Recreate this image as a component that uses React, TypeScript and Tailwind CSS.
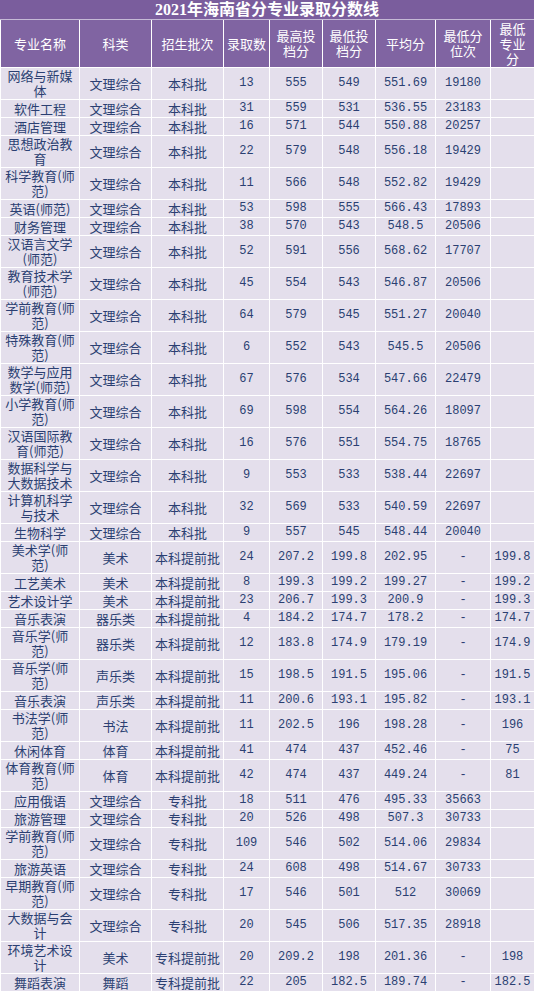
const rows: string[][] = [
  ["网络与新媒\n体", "文理综合", "本科批", "13", "555", "549", "551.69", "19180", ""],
  ["软件工程", "文理综合", "本科批", "31", "559", "531", "536.55", "23183", ""],
  ["酒店管理", "文理综合", "本科批", "16", "571", "544", "550.88", "20257", ""],
  ["思想政治教\n育", "文理综合", "本科批", "22", "579", "548", "556.18", "19429", ""],
  ["科学教育(师\n范)", "文理综合", "本科批", "11", "566", "548", "552.82", "19429", ""],
  ["英语(师范)", "文理综合", "本科批", "53", "598", "555", "566.43", "17893", ""],
  ["财务管理", "文理综合", "本科批", "38", "570", "543", "548.5", "20506", ""],
  ["汉语言文学\n(师范)", "文理综合", "本科批", "52", "591", "556", "568.62", "17707", ""],
  ["教育技术学\n(师范)", "文理综合", "本科批", "45", "554", "543", "546.87", "20506", ""],
  ["学前教育(师\n范)", "文理综合", "本科批", "64", "579", "545", "551.27", "20040", ""],
  ["特殊教育(师\n范)", "文理综合", "本科批", "6", "552", "543", "545.5", "20506", ""],
  ["数学与应用\n数学(师范)", "文理综合", "本科批", "67", "576", "534", "547.66", "22479", ""],
  ["小学教育(师\n范)", "文理综合", "本科批", "69", "598", "554", "564.26", "18097", ""],
  ["汉语国际教\n育(师范)", "文理综合", "本科批", "16", "576", "551", "554.75", "18765", ""],
  ["数据科学与\n大数据技术", "文理综合", "本科批", "9", "553", "533", "538.44", "22697", ""],
  ["计算机科学\n与技术", "文理综合", "本科批", "32", "569", "533", "540.59", "22697", ""],
  ["生物科学", "文理综合", "本科批", "9", "557", "545", "548.44", "20040", ""],
  ["美术学(师\n范)", "美术", "本科提前批", "24", "207.2", "199.8", "202.95", "-", "199.8"],
  ["工艺美术", "美术", "本科提前批", "8", "199.3", "199.2", "199.27", "-", "199.2"],
  ["艺术设计学", "美术", "本科提前批", "23", "206.7", "199.3", "200.9", "-", "199.3"],
  ["音乐表演", "器乐类", "本科提前批", "4", "184.2", "174.7", "178.2", "-", "174.7"],
  ["音乐学(师\n范)", "器乐类", "本科提前批", "12", "183.8", "174.9", "179.19", "-", "174.9"],
  ["音乐学(师\n范)", "声乐类", "本科提前批", "15", "198.5", "191.5", "195.06", "-", "191.5"],
  ["音乐表演", "声乐类", "本科提前批", "11", "200.6", "193.1", "195.82", "-", "193.1"],
  ["书法学(师\n范)", "书法", "本科提前批", "11", "202.5", "196", "198.28", "-", "196"],
  ["休闲体育", "体育", "本科提前批", "41", "474", "437", "452.46", "-", "75"],
  ["体育教育(师\n范)", "体育", "本科提前批", "42", "474", "437", "449.24", "-", "81"],
  ["应用俄语", "文理综合", "专科批", "18", "511", "476", "495.33", "35663", ""],
  ["旅游管理", "文理综合", "专科批", "20", "526", "498", "507.3", "30733", ""],
  ["学前教育(师\n范)", "文理综合", "专科批", "109", "546", "502", "514.06", "29834", ""],
  ["旅游英语", "文理综合", "专科批", "24", "608", "498", "514.67", "30733", ""],
  ["早期教育(师\n范)", "文理综合", "专科批", "17", "546", "501", "512", "30069", ""],
  ["大数据与会\n计", "文理综合", "专科批", "20", "545", "506", "517.35", "28918", ""],
  ["环境艺术设\n计", "美术", "专科提前批", "20", "209.2", "198", "201.36", "-", "198"],
  ["舞蹈表演", "舞蹈", "专科提前批", "22", "205", "182.5", "189.74", "-", "182.5"],
];

const headers = ["专业名称", "科类", "招生批次", "录取数", "最高投\n档分", "最低投\n档分", "平均分", "最低分\n位次", "最低\n专业\n分"];
const widths = [79, 72, 72, 46, 53, 53, 60, 55, 44];

const cjk = "font-['Noto_Sans_CJK_SC',sans-serif]";
const mono = "font-['Liberation_Mono','Noto_Sans_CJK_SC',monospace]";

export default function App() {
  return (
    <div className="w-[534px] h-[992px] overflow-hidden bg-[#e4dfec]">
      <div className="h-[20px] border-b border-[#c5bad6] bg-[#7a5d9d] text-center text-[16px] font-bold leading-[19px] text-white font-['Liberation_Serif','Noto_Sans_CJK_SC',serif]">
        2021年海南省分专业录取分数线
      </div>
      <table className="w-[534px] table-fixed border-collapse">
        <colgroup>
          {widths.map((w, i) => (
            <col key={i} style={{ width: w }} />
          ))}
        </colgroup>
        <thead>
          <tr className="h-[47px]">
            {headers.map((h, i) => (
              <th
                key={i}
                className={`border border-t-0 border-white bg-[#8064a2] p-0 text-center align-middle text-[13px] font-normal leading-[15px] whitespace-pre text-white ${cjk}`}
              >
                {h}
              </th>
            ))}
          </tr>
        </thead>
        <tbody>
          {rows.map((r, ri) => {
            const tall = r[0].includes("\n");
            return (
              <tr key={ri} className={tall ? "h-[32px]" : "h-[18px]"}>
                {r.map((c, ci) => (
                  <td
                    key={ci}
                    className={`border border-white bg-[#e4dfec] p-0 text-center align-middle whitespace-pre text-[#2b3f72] ${
                      ci < 3 ? `text-[13px] leading-[15px] ${cjk}` : `text-[12px] leading-[15px] ${mono}`
                    }`}
                  >
                    {c}
                  </td>
                ))}
              </tr>
            );
          })}
        </tbody>
      </table>
    </div>
  );
}
